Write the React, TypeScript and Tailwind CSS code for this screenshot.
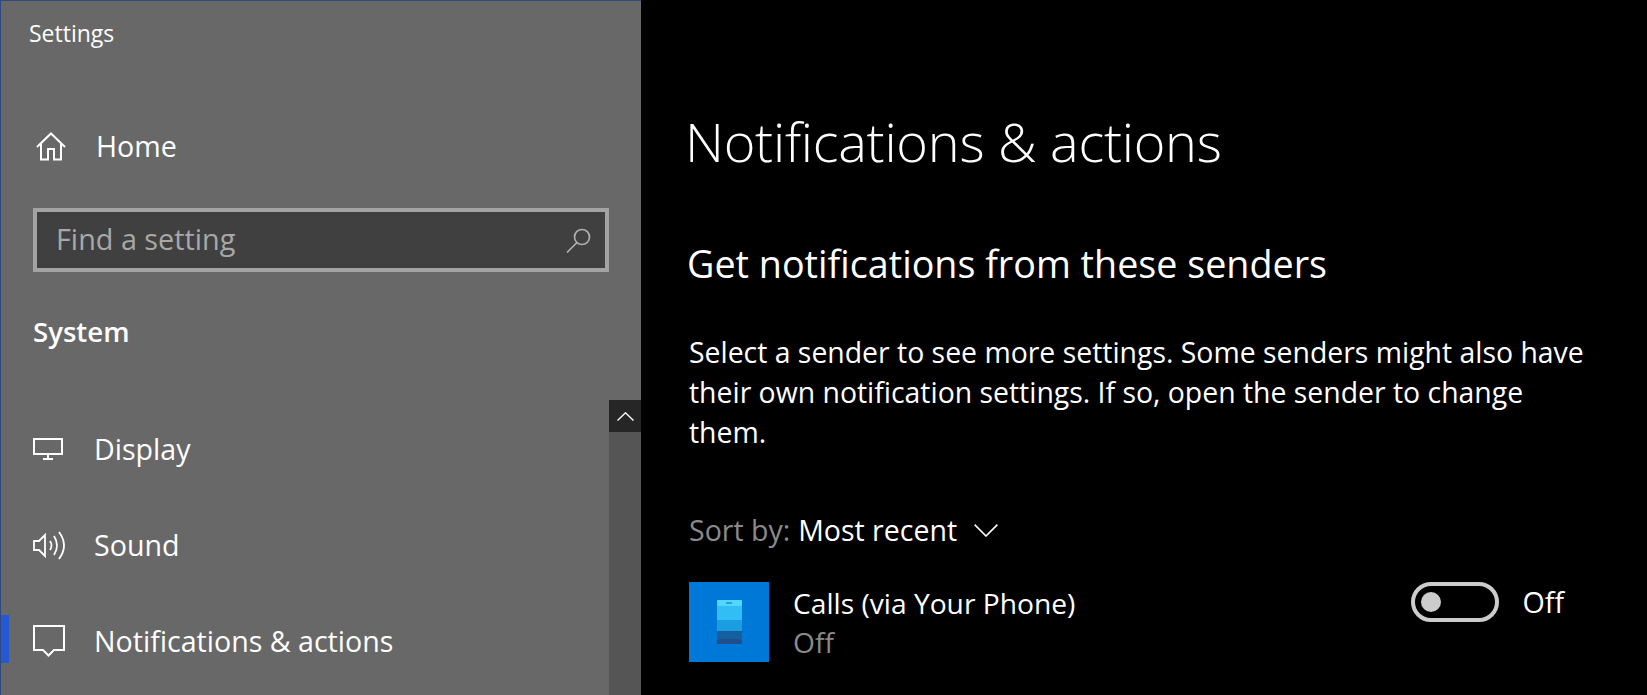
import React from 'react';

const font = { fontFamily: '"Open Sans", "Noto Sans", sans-serif' };

const HomeIcon = () => (
  <svg width="30" height="29" viewBox="0 0 30 29" fill="none" stroke="white" strokeWidth="2">
    <path d="M1 15 L15 1.5 L29 15" />
    <path d="M5 11 V27.5 H12 V17 H18 V27.5 H25 V11" />
  </svg>
);

const DisplayIcon = () => (
  <svg width="30" height="22" viewBox="0 0 30 22" fill="none" stroke="white" strokeWidth="2">
    <rect x="1" y="1" width="28" height="15" />
    <path d="M15 16 V21 M10 21 H20" />
  </svg>
);

const SoundIcon = () => (
  <svg width="33" height="29" viewBox="0 0 33 29" fill="none" stroke="white" strokeWidth="1.8">
    <path d="M1 10 H6 L12 4 V25 L6 19 H1 Z" />
    <path d="M17 10 Q20 14.5 17 19" />
    <path d="M21 5 Q27 14.5 21 24" />
    <path d="M26 1 Q36 14.5 26 28" />
  </svg>
);

const BubbleIcon = () => (
  <svg width="32" height="32" viewBox="0 0 32 32" fill="none" stroke="white" strokeWidth="2">
    <path d="M1 1 H31 V25 H21 L15.5 30.5 L10 25 H1 Z" />
  </svg>
);

const SearchIcon = () => (
  <svg width="25" height="25" viewBox="0 0 25 25" fill="none" stroke="#aeaeae" strokeWidth="1.7">
    <circle cx="16" cy="9" r="7.5" />
    <path d="M11 14.5 L1 24.5" />
  </svg>
);

const PhoneTile = () => (
  <div className="w-20 h-20 shrink-0 bg-[#0078d7] flex items-center justify-center">
    <svg width="25" height="44" viewBox="0 0 25 44">
      <rect x="0" y="0" width="25" height="44" rx="2" fill="#28a8ea" />
      <rect x="0" y="0" width="25" height="6" rx="1" fill="#50d8ff" />
      <rect x="0" y="6" width="25" height="14" fill="#32bdf5" />
      <rect x="0" y="20" width="25" height="11" fill="#1b9de2" />
      <rect x="0" y="31" width="25" height="8" fill="#14609e" />
      <rect x="0" y="39" width="25" height="5" rx="1" fill="#1f4e8c" />
      <rect x="9" y="2.5" width="6" height="1" fill="#14609e" />
    </svg>
  </div>
);

const NavItem = ({ icon, label, active }: { icon: React.ReactNode; label: string; active?: boolean }) => (
  <div className="relative h-[96px] flex items-center pl-[32px] text-white text-[28.6px]">
    {active && <div className="absolute left-0 top-[22px] w-2 h-12 bg-[#2658d4]" />}
    <div className="w-[61px] flex items-center">{icon}</div>
    <span>{label}</span>
  </div>
);

export default function App() {
  return (
    <div className="w-[1647px] h-[695px] flex overflow-hidden bg-black" style={font}>
      <aside className="relative w-[641px] shrink-0 h-full bg-[#686868] border-l border-t border-[#2d4a7f] flex flex-col">
        <div className="h-[65px] pl-7 flex items-center text-white text-[23px]">Settings</div>
        <div className="mt-10 h-[80px] pl-[35px] flex items-center gap-[30px] text-white text-[28.6px]">
          <HomeIcon />
          <span>Home</span>
        </div>
        <div className="mt-[22px] ml-8 w-[576px] h-[64px] border-4 border-[#a3a3a3] bg-[#404040] flex items-center justify-between pl-[19px] pr-[14px] text-[#a8a8a8] text-[28.8px]">
          <span className="pb-[2px]">Find a setting</span>
          <SearchIcon />
        </div>
        <div className="mt-[37px] pl-8 text-white text-[27.6px] font-semibold leading-[44px]">System</div>
        <div className="mt-[48px] flex flex-col">
          <NavItem icon={<DisplayIcon />} label="Display" />
          <NavItem icon={<SoundIcon />} label="Sound" />
          <NavItem icon={<BubbleIcon />} label="Notifications & actions" active />
        </div>
        <div className="absolute right-0 top-[399px] bottom-0 w-8 bg-[#555555]">
          <div className="h-8 bg-[#262626] flex items-center justify-center">
            <svg width="17" height="9" viewBox="0 0 17 9" fill="none" stroke="white" strokeWidth="1.4">
              <path d="M0.5 8.5 L8.5 0.8 L16.5 8.5" />
            </svg>
          </div>
        </div>
      </aside>

      <main className="flex-1 pl-[45px] text-white">
        <h1 className="mt-[105px] -ml-px text-[54px] tracking-[-0.25px] font-light leading-[72px]">Notifications &amp; actions</h1>
        <h2 className="mt-[63px] ml-px text-[37.7px] leading-[48px] font-normal">Get notifications from these senders</h2>
        <div className="ml-[3px] w-[900px]">
          <p className="mt-[44px] text-[28.4px] leading-[40px]">
            Select a sender to see more settings. Some senders might also have their own notification settings. If so, open the sender to change them.
          </p>
          <div className="mt-[58px] flex items-center text-[28.5px] leading-[40px]">
            <span className="text-[#8a8a8a] mr-2">Sort by:</span>
            <span>Most recent</span>
            <svg className="ml-[17px]" width="24" height="13" viewBox="0 0 24 13" fill="none" stroke="white" strokeWidth="1.6">
              <path d="M0.6 0.6 L12 12 L23.4 0.6" />
            </svg>
          </div>
          <div className="mt-[32px] flex items-start">
            <PhoneTile />
            <div className="ml-6 pt-[2px] flex-1 text-[28.2px] leading-[39px]">
              <div>Calls (via Your Phone)</div>
              <div className="text-[#8a8a8a]">Off</div>
            </div>
            <div className="flex items-center mr-[25px] h-10">
              <div className="w-[88px] h-10 rounded-full border-4 border-[#cccccc] flex items-center pl-[6px]">
                <div className="w-5 h-5 rounded-full bg-[#cccccc]" />
              </div>
              <span className="ml-[23px] text-[28.7px]">Off</span>
            </div>
          </div>
        </div>
      </main>
    </div>
  );
}
